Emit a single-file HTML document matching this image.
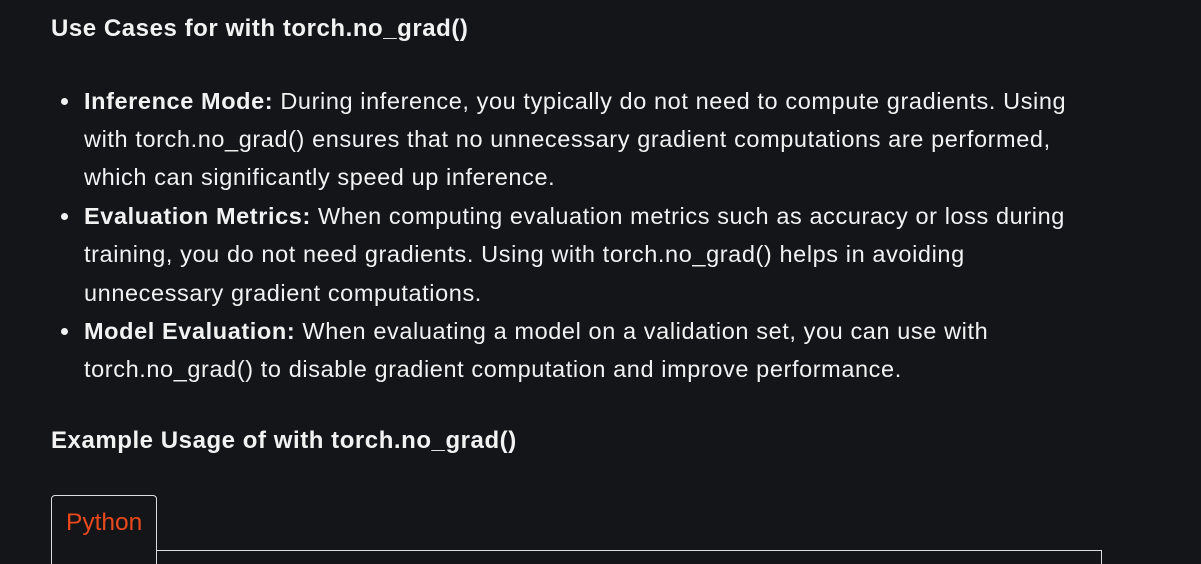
<!DOCTYPE html>
<html><head><style>
html,body{margin:0;padding:0;background:#141519;width:1201px;height:564px;overflow:hidden}
body{font-family:"Liberation Sans",sans-serif;color:#f2f2f2;position:relative}
.l{position:absolute;white-space:nowrap;font-size:23.5px;letter-spacing:0.6px;line-height:38px;left:84px}
.h{position:absolute;left:51px;font-size:24px;letter-spacing:0.55px;font-weight:bold;white-space:nowrap;line-height:30px}
.d{position:absolute;left:61px;width:7px;height:7px;border-radius:50%;background:#f2f2f2}
b{font-weight:bold}
</style></head><body>
<div class="h" style="top:14px">Use Cases for with torch.no_grad()</div>
<div class="d" style="top:98px"></div>
<div class="l" style="top:82px"><b>Inference Mode:</b> During inference, you typically do not need to compute gradients. Using</div>
<div class="l" style="top:120px">with torch.no_grad() ensures that no unnecessary gradient computations are performed,</div>
<div class="l" style="top:158px">which can significantly speed up inference.</div>
<div class="d" style="top:213px"></div>
<div class="l" style="top:197px"><b>Evaluation Metrics:</b> When computing evaluation metrics such as accuracy or loss during</div>
<div class="l" style="top:235px">training, you do not need gradients. Using with torch.no_grad() helps in avoiding</div>
<div class="l" style="top:274px">unnecessary gradient computations.</div>
<div class="d" style="top:328px"></div>
<div class="l" style="top:312px"><b>Model Evaluation:</b> When evaluating a model on a validation set, you can use with</div>
<div class="l" style="top:350px">torch.no_grad() to disable gradient computation and improve performance.</div>
<div class="h" style="top:426px">Example Usage of with torch.no_grad()</div>
<div style="position:absolute;left:51px;top:495px;width:104px;height:70px;border:1px solid #ddd;border-bottom:none;border-radius:4px 4px 0 0;background:#141519"></div>
<div style="position:absolute;left:156px;top:550px;width:945px;height:20px;border-top:1px solid #ddd;border-right:1px solid #ddd"></div>
<div style="position:absolute;left:66px;top:509px;font-size:24.5px;color:#e8491d;line-height:28px">Python</div>
</body></html>
